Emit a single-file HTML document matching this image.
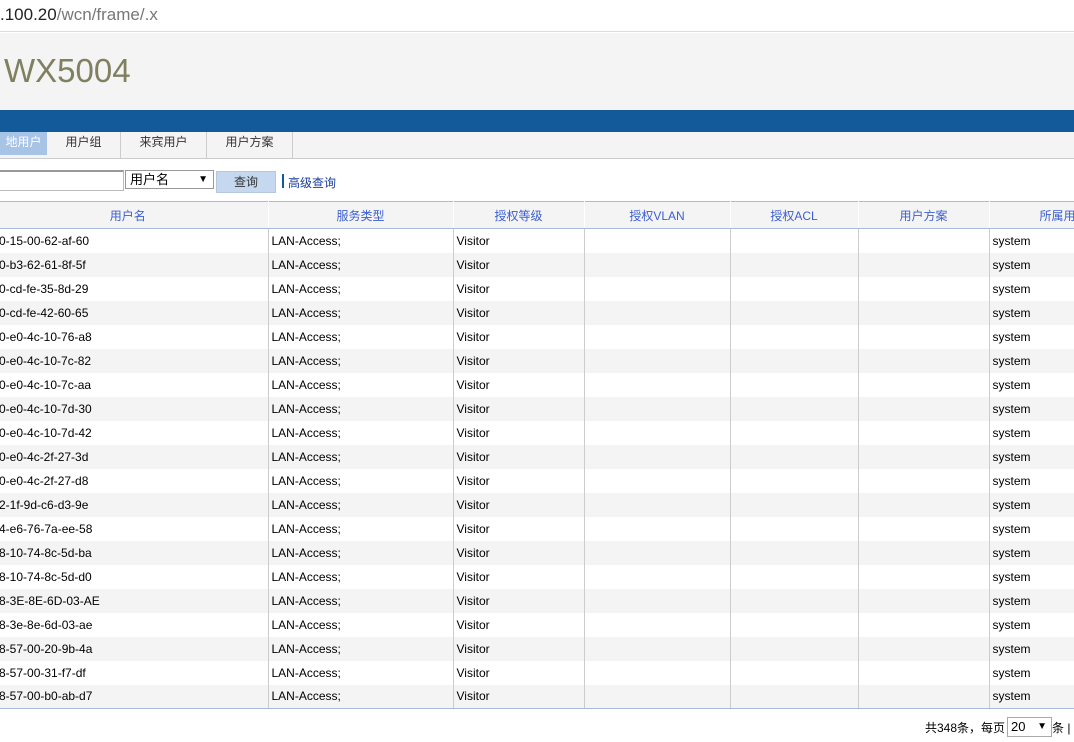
<!DOCTYPE html>
<html><head><meta charset="utf-8"><style>
*{margin:0;padding:0;box-sizing:border-box}
body{width:1074px;height:742px;overflow:hidden;background:#fff;font-family:"Liberation Sans","Noto Sans CJK SC",sans-serif;font-size:12px;color:#000;position:relative}
.abs{position:absolute}
.addr{top:0;left:0;width:1074px;height:32px;border-bottom:1px solid #ddd;font-size:17px;line-height:30px;color:#222;padding-left:0}
.addr span{color:#777}
.hdr{top:33px;left:0;width:1074px;height:77px;background:#f4f4f4}
.hdr div{position:absolute;left:4px;top:19px;font-size:33px;color:#808060}
.bar{top:110px;left:0;width:1074px;height:22px;background:#135a9a}
.tabs{top:132px;left:0;width:1074px;height:27px;background:#f4f4f4;border-bottom:1px solid #ccc}
.tab{position:absolute;top:0;height:26px;line-height:20px;font-size:12px;color:#333;text-align:center;border-right:1px solid #ccc}
table{position:absolute;top:201px;left:-12px;width:1171px;border-collapse:collapse;table-layout:fixed}
td,th{height:24px;padding:0 3px;font-size:12px;font-weight:normal;border-right:1px solid #ccc;white-space:nowrap;overflow:hidden;text-align:left}
th{height:27px;background:#f4f4f4;color:#3b5fd0;text-align:center;border-top:1px solid #a8bcd8;border-bottom:1px solid #a8bcd8;border-right:1px solid #fff}
tbody td{background:#fff}
tbody tr:nth-child(even) td{background:#f4f4f4}
tbody tr:last-child td{border-bottom:1px solid #a8bcd8}
tbody td:first-child{padding-left:11px}
</style></head><body>
<div class="abs addr">.100.20<span>/wcn/frame/.x</span></div>
<div class="abs hdr"><div>WX5004</div></div>
<div class="abs bar"></div>
<div class="abs tabs">
<div class="tab" style="left:0;width:47px;background:#a7c3e6;color:#fff;height:23px;border:none">地用户</div>
<div class="tab" style="left:47px;width:74px">用户组</div>
<div class="tab" style="left:121px;width:86px">来宾用户</div>
<div class="tab" style="left:207px;width:86px">用户方案</div>
</div>
<div class="abs" style="top:170px;left:-2px;width:126px;height:21px;border:1px solid #bbb;border-top:2px solid #999"></div>
<div class="abs" style="top:170px;left:125px;width:89px;height:19px;border:1px solid #999;font-size:13px;line-height:17px;padding-left:4px">用户名<span style="position:absolute;right:5px;font-size:10px">▼</span></div>
<div class="abs" style="top:171px;left:216px;width:60px;height:22px;background:#c5d8f0;border:1px solid #b5c8e0;text-align:center;line-height:20px;color:#333">查询</div>
<div class="abs" style="top:174px;left:282px;width:2px;height:14px;background:#135a9a"></div>
<div class="abs" style="top:174px;left:288px;color:#1a3ea0">高级查询</div>
<table>
<colgroup><col style="width:280px"><col style="width:185px"><col style="width:131px"><col style="width:146px"><col style="width:128px"><col style="width:131px"><col style="width:170px"></colgroup>
<thead><tr><th>用户名</th><th>服务类型</th><th>授权等级</th><th>授权VLAN</th><th>授权ACL</th><th>用户方案</th><th style="text-align:left;padding-left:50px">所属用户组</th></tr></thead>
<tbody>
<tr><td>0-15-00-62-af-60</td><td>LAN-Access;</td><td>Visitor</td><td></td><td></td><td></td><td>system</td></tr>
<tr><td>0-b3-62-61-8f-5f</td><td>LAN-Access;</td><td>Visitor</td><td></td><td></td><td></td><td>system</td></tr>
<tr><td>0-cd-fe-35-8d-29</td><td>LAN-Access;</td><td>Visitor</td><td></td><td></td><td></td><td>system</td></tr>
<tr><td>0-cd-fe-42-60-65</td><td>LAN-Access;</td><td>Visitor</td><td></td><td></td><td></td><td>system</td></tr>
<tr><td>0-e0-4c-10-76-a8</td><td>LAN-Access;</td><td>Visitor</td><td></td><td></td><td></td><td>system</td></tr>
<tr><td>0-e0-4c-10-7c-82</td><td>LAN-Access;</td><td>Visitor</td><td></td><td></td><td></td><td>system</td></tr>
<tr><td>0-e0-4c-10-7c-aa</td><td>LAN-Access;</td><td>Visitor</td><td></td><td></td><td></td><td>system</td></tr>
<tr><td>0-e0-4c-10-7d-30</td><td>LAN-Access;</td><td>Visitor</td><td></td><td></td><td></td><td>system</td></tr>
<tr><td>0-e0-4c-10-7d-42</td><td>LAN-Access;</td><td>Visitor</td><td></td><td></td><td></td><td>system</td></tr>
<tr><td>0-e0-4c-2f-27-3d</td><td>LAN-Access;</td><td>Visitor</td><td></td><td></td><td></td><td>system</td></tr>
<tr><td>0-e0-4c-2f-27-d8</td><td>LAN-Access;</td><td>Visitor</td><td></td><td></td><td></td><td>system</td></tr>
<tr><td>2-1f-9d-c6-d3-9e</td><td>LAN-Access;</td><td>Visitor</td><td></td><td></td><td></td><td>system</td></tr>
<tr><td>4-e6-76-7a-ee-58</td><td>LAN-Access;</td><td>Visitor</td><td></td><td></td><td></td><td>system</td></tr>
<tr><td>8-10-74-8c-5d-ba</td><td>LAN-Access;</td><td>Visitor</td><td></td><td></td><td></td><td>system</td></tr>
<tr><td>8-10-74-8c-5d-d0</td><td>LAN-Access;</td><td>Visitor</td><td></td><td></td><td></td><td>system</td></tr>
<tr><td>8-3E-8E-6D-03-AE</td><td>LAN-Access;</td><td>Visitor</td><td></td><td></td><td></td><td>system</td></tr>
<tr><td>8-3e-8e-6d-03-ae</td><td>LAN-Access;</td><td>Visitor</td><td></td><td></td><td></td><td>system</td></tr>
<tr><td>8-57-00-20-9b-4a</td><td>LAN-Access;</td><td>Visitor</td><td></td><td></td><td></td><td>system</td></tr>
<tr><td>8-57-00-31-f7-df</td><td>LAN-Access;</td><td>Visitor</td><td></td><td></td><td></td><td>system</td></tr>
<tr><td>8-57-00-b0-ab-d7</td><td>LAN-Access;</td><td>Visitor</td><td></td><td></td><td></td><td>system</td></tr>
</tbody></table>
<div class="abs" style="top:719px;left:925px;line-height:18px">共348条，每页</div>
<div class="abs" style="top:717px;left:1007px;width:45px;height:20px;border:1px solid #aaa;line-height:18px;padding-left:3px;font-size:13px">20<span style="position:absolute;right:4px;font-size:10px">▼</span></div>
<div class="abs" style="top:719px;left:1052px;line-height:18px">条 |</div>
</body></html>
